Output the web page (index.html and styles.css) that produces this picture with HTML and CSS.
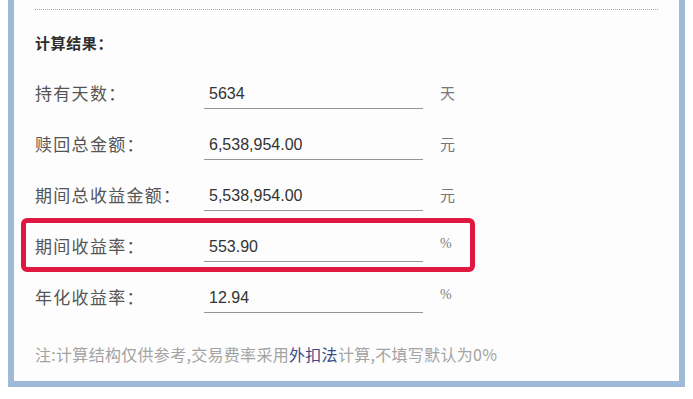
FILE: index.html
```html
<!DOCTYPE html>
<html lang="zh-CN">
<head>
<meta charset="utf-8">
<title>计算结果</title>
<link rel="stylesheet" href="styles.css">
</head>
<body>
<div class="panel">
  <div class="divider"></div>
  <div class="title">计算结果：</div>
  <div class="rows">
    <div class="row">
      <span class="label">持有天数：</span>
      <span class="field">5634</span>
      <span class="unit">天</span>
    </div>
    <div class="row">
      <span class="label">赎回总金额：</span>
      <span class="field">6,538,954.00</span>
      <span class="unit">元</span>
    </div>
    <div class="row">
      <span class="label">期间总收益金额：</span>
      <span class="field">5,538,954.00</span>
      <span class="unit">元</span>
    </div>
    <div class="row highlighted">
      <span class="label">期间收益率：</span>
      <span class="field">553.90</span>
      <span class="unit pct">%</span>
      <span class="mark"></span>
    </div>
    <div class="row">
      <span class="label">年化收益率：</span>
      <span class="field">12.94</span>
      <span class="unit pct">%</span>
    </div>
  </div>
  <div class="note">注:计算结构仅供参考,交易费率采用<span class="link">外扣法</span>计算,不填写默认为0%</div>
</div>
</body>
</html>
```
FILE: styles.css
```css
html, body {
  margin: 0;
  padding: 0;
  background: #ffffff;
}
body {
  width: 693px;
  height: 399px;
  overflow: hidden;
  font-family: "Noto Sans CJK SC", "Liberation Sans", sans-serif;
}
.panel {
  margin: 0 8px;
  height: 387px;
  box-sizing: border-box;
  border: 6px solid #9fb9d9;
  border-top: none;
  background: #fdfdfd;
  padding: 9px 21px 0 21px;
}
.divider {
  height: 0;
  border-top: 1px dotted #a8a8a8;
}
.title {
  margin-top: 23px;
  height: 20px;
  line-height: 20px;
  font-size: 15px;
  font-weight: bold;
  letter-spacing: 0.6px;
  color: #2e2e2e;
}
.rows {
  margin-top: 15px;
}
.row {
  position: relative;
  display: flex;
  align-items: center;
  height: 51px;
}
.label {
  width: 169px;
  flex: none;
  font-size: 17px;
  letter-spacing: 1.3px;
  color: #555555;
  line-height: 20px;
  margin-top: -2px;
}
.field {
  width: 219px;
  height: 30px;
  box-sizing: border-box;
  flex: none;
  padding-left: 5px;
  border-bottom: 1px solid #959595;
  font-family: "Liberation Sans", Arial, sans-serif;
  font-size: 16px;
  line-height: 30px;
  color: #333333;
}
.unit {
  margin-left: 17px;
  font-size: 15px;
  color: #777777;
  line-height: 20px;
  margin-top: -2px;
}
.unit.pct {
  font-family: "Liberation Serif", serif;
  font-size: 14px;
  margin-top: -6px;
  color: #808080;
}
.mark {
  position: absolute;
  left: -14px;
  top: -3px;
  width: 454px;
  height: 54px;
  box-sizing: border-box;
  border: 5px solid #e0173f;
  border-radius: 6px;
}
.note {
  margin-top: 21px;
  height: 20px;
  line-height: 20px;
  font-size: 16px;
  letter-spacing: 0.3px;
  color: #a3a3a3;
}
.link {
  color: #3b4a88;
}
```
